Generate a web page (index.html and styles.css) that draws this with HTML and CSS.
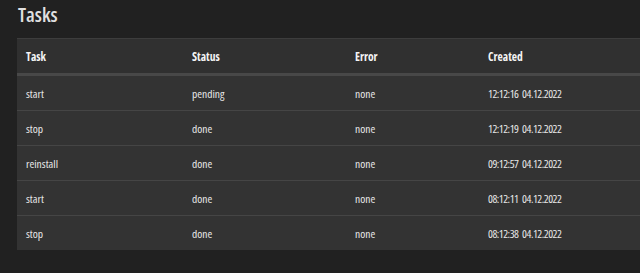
FILE: index.html
```html
<!DOCTYPE html>
<html>
<head>
<meta charset="utf-8">
<link rel="stylesheet" href="styles.css">
</head>
<body>
<h1 class="title">Tasks</h1>
<div class="tasks">
  <div class="row head">
    <div class="cell c1">Task</div><div class="cell c2">Status</div><div class="cell c3">Error</div><div class="cell c4">Created</div>
  </div>
  <div class="row">
    <div class="cell c1">start</div><div class="cell c2">pending</div><div class="cell c3">none</div><div class="cell c4 date">12:12:16 04.12.2022</div>
  </div>
  <div class="row">
    <div class="cell c1">stop</div><div class="cell c2">done</div><div class="cell c3">none</div><div class="cell c4 date">12:12:19 04.12.2022</div>
  </div>
  <div class="row">
    <div class="cell c1">reinstall</div><div class="cell c2">done</div><div class="cell c3">none</div><div class="cell c4 date">09:12:57 04.12.2022</div>
  </div>
  <div class="row">
    <div class="cell c1">start</div><div class="cell c2">done</div><div class="cell c3">none</div><div class="cell c4 date">08:12:11 04.12.2022</div>
  </div>
  <div class="row last">
    <div class="cell c1">stop</div><div class="cell c2">done</div><div class="cell c3">none</div><div class="cell c4 date">08:12:38 04.12.2022</div>
  </div>
</div>
</body>
</html>
```
FILE: styles.css
```css
html, body {
  margin: 0;
  padding: 0;
  background: #212121;
  overflow: hidden;
}
body {
  padding: 0 0 0 17px;
  font-family: "Open Sans", sans-serif;
  font-stretch: condensed;
  color: #e8e8e8;
}
.title {
  margin: 0;
  padding: 1px 0 0 1px;
  height: 38px;
  box-sizing: border-box;
  font-family: "Open Sans", sans-serif;
  font-stretch: semi-condensed;
  font-weight: 600;
  font-size: 20px;
  line-height: 28px;
  color: #e0e0e0;
}
.tasks {
  display: flex;
  flex-direction: column;
  width: 623px;
  font-size: 11.5px;
}
.row {
  display: flex;
  height: 35px;
  box-sizing: border-box;
  background: #333333;
  border-bottom: 1px solid #454545;
}
.row.head {
  height: 38px;
  background: #303030;
  border-top: 1px solid #3d3d3d;
  border-bottom: 3px solid #484848;
  font-weight: 700;
  color: #f4f4f4;
}
.row.last {
  height: 34px;
  border-bottom: none;
}
.cell {
  display: flex;
  align-items: center;
  padding-left: 9px;
  box-sizing: border-box;
  white-space: pre;
}
.date {
  letter-spacing: -0.5px;
  word-spacing: 2px;
}
.c1 { width: 166px; }
.c2 { width: 163px; }
.c3 { width: 133px; }
.c4 { flex: 1; }
```
